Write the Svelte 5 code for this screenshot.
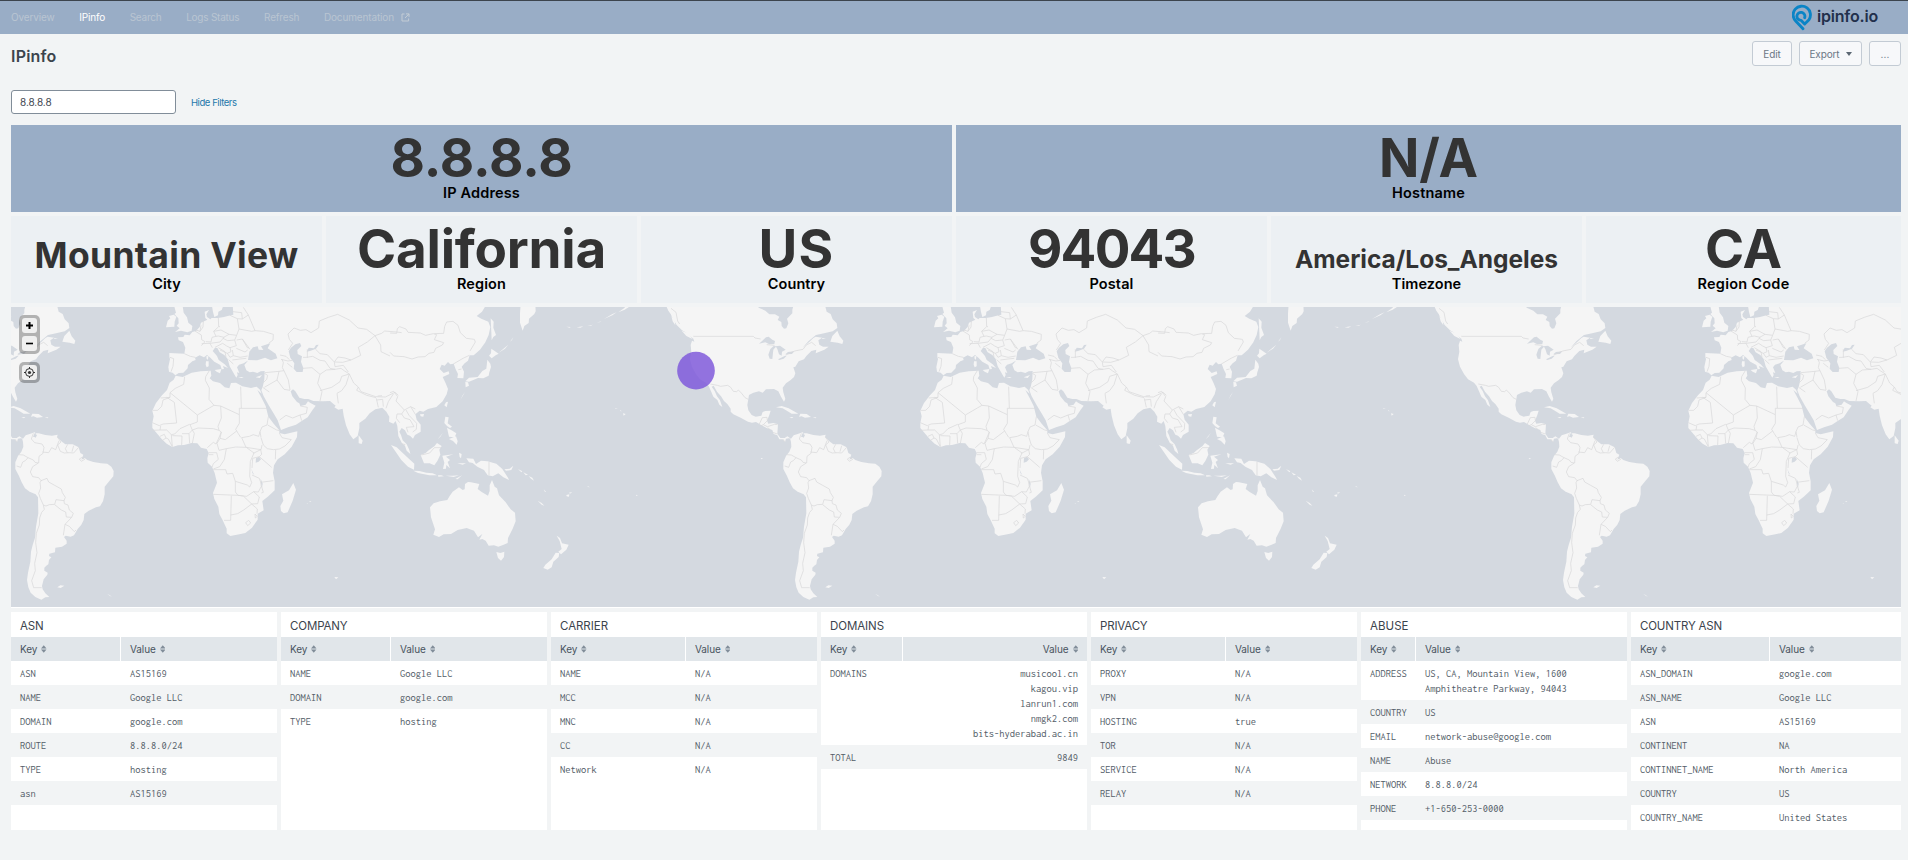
<script>
  // Spreads the letters of a text so that it takes the given width.
  function fit(node, width) {
    const range = document.createRange();
    range.selectNodeContents(node);
    const natural = range.getBoundingClientRect().width;
    const count = node.textContent.length;
    node.style.letterSpacing = (width - natural) / count + 'px';
  }

  const nav = [
    ['Overview', 43.5], ['IPinfo', 25.8], ['Search', 31.8], ['Logs Status', 53.2], ['Refresh', 35.2], ['Documentation', 70]
  ];

  const top = [
    { value: '8.8.8.8', w: 182, size: 53, label: 'IP Address', lw: 77 },
    { value: 'N/A', w: 99, size: 53, label: 'Hostname', lw: 73 }
  ];
  const details = [
    { value: 'Mountain View', w: 264, size: 35.5, label: 'City', lw: 28.5 },
    { value: 'California', w: 249, size: 53, label: 'Region', lw: 49 },
    { value: 'US', w: 76, size: 53, label: 'Country', lw: 57.5 },
    { value: '94043', w: 167, size: 53, label: 'Postal', lw: 44 },
    { value: 'America/Los_Angeles', w: 263, size: 24.5, label: 'Timezone', lw: 69.5 },
    { value: 'CA', w: 77, size: 53, label: 'Region Code', lw: 92 }
  ];

  const tables = [
    { title: 'ASN', tw: 23.5, key: 110, rows: [['ASN', 'AS15169'], ['NAME', 'Google LLC'], ['DOMAIN', 'google.com'], ['ROUTE', '8.8.8.0/24'], ['TYPE', 'hosting'], ['asn', 'AS15169']] },
    { title: 'COMPANY', tw: 57.5, key: 110, rows: [['NAME', 'Google LLC'], ['DOMAIN', 'google.com'], ['TYPE', 'hosting']] },
    { title: 'CARRIER', tw: 48, key: 135, rows: [['NAME', 'N/A'], ['MCC', 'N/A'], ['MNC', 'N/A'], ['CC', 'N/A'], ['Network', 'N/A']] },
    { title: 'DOMAINS', tw: 54, key: 82, right: true, rows: [['DOMAINS', 'musicool.cn\nkagou.vip\nlanrun1.com\nnmgk2.com\nbits-hyderabad.ac.in'], ['TOTAL', '9849']] },
    { title: 'PRIVACY', tw: 47.5, key: 135, rows: [['PROXY', 'N/A'], ['VPN', 'N/A'], ['HOSTING', 'true'], ['TOR', 'N/A'], ['SERVICE', 'N/A'], ['RELAY', 'N/A']] },
    { title: 'ABUSE', tw: 38.5, key: 55, rows: [['ADDRESS', 'US, CA, Mountain View, 1600\nAmphitheatre Parkway, 94043'], ['COUNTRY', 'US'], ['EMAIL', 'network-abuse@google.com'], ['NAME', 'Abuse'], ['NETWORK', '8.8.8.0/24'], ['PHONE', '+1-650-253-0000']] },
    { title: 'COUNTRY ASN', tw: 82, key: 139, rows: [['ASN_DOMAIN', 'google.com'], ['ASN_NAME', 'Google LLC'], ['ASN', 'AS15169'], ['CONTINENT', 'NA'], ['CONTINNET_NAME', 'North America'], ['COUNTRY', 'US'], ['COUNTRY_NAME', 'United States']] }
  ];

  const worldCopies = [-2304, 0, 2304, 4608];
</script>

<nav class="bar">
  {#each nav as [name, w], i}
    <a href="#top" class:active={i === 1}><span use:fit={w}>{name}</span>{#if i === 5}<svg class="ext" width="9" height="9" viewBox="0 0 9 9"><path d="M3.5 1H1v7h6.6V5.5M5 .9h3v3M8 .9 4 5" /></svg>{/if}</a>
  {/each}
  <div class="logo">
    <svg width="21" height="27" viewBox="0 0 63 81"><path d="M33 74 L11 51 A26 26 0 1 1 51 47 L38 60 L27 49 A12 12 0 1 1 38 41" /></svg>
    <span use:fit={61}>ipinfo.io</span>
  </div>
</nav>

<header>
  <h1><span use:fit={45.5}>IPinfo</span></h1>
  <div class="actions">
    <button style:width="40px"><span use:fit={17.5}>Edit</span></button>
    <button style:width="63px"><span use:fit={30}>Export</span><i class="caret"></i></button>
    <button style:width="32px"><span use:fit={9}>...</span></button>
  </div>
</header>

<div class="filters">
  <div class="input"><span use:fit={31.5}>8.8.8.8</span></div>
  <a href="#top"><span use:fit={45.5}>Hide Filters</span></a>
</div>

<main>
  {#snippet single(item)}
    <section class="single">
      <div class="value"><span style:font-size="{item.size}px" use:fit={item.w}>{item.value}</span></div>
      <div class="label"><span use:fit={item.lw}>{item.label}</span></div>
    </section>
  {/snippet}

  <div class="row two">{#each top as item}{@render single(item)}{/each}</div>
  <div class="row six">{#each details as item}{@render single(item)}{/each}</div>

  <div class="map">
    <svg width="1890" height="300" viewBox="33 21 5670 900">
      <defs>
        <g id="world">
          <!-- Americas -->
          <g transform="translate(-384 0)">
            <path class="land" d="M76 12 85 32 92 42 98 55 110 75 126 91 137 97 148 107 160 116 163 125 156 122 152 135 154 155 150 178 156 200 168 222 180 238 198 248 206 258 213 274 220 290 232 300 238 314 247 321 240 301 231 289 224 273 215 260 221 257 231 275 243 289 252 303 262 312 272 326 272 335 280 343 302 353 324 365 336 368 348 366 362 374 380 384 397 390 401 402 412 406 418 418 428 418 435 426 438 416 450 414 453 426 454 440 448 455 438 468 430 487 430 507 441 528 449 547 459 565 473 575 491 583 498 592 499 640 492 680 489 713 482 735 477 755 475 785 468 818 465 840 469 862 476 878 490 891 508 899 520 892 532 891 520 880 512 868 510 858 515 838 526 824 527 818 517 812 517 803 523 797 529 793 531 780 538 772 531 768 532 761 549 757 550 743 570 740 584 731 584 722 576 711 581 707 596 710 606 706 617 687 628 674 635 660 637 642 650 632 672 622 684 619 693 604 698 583 698 560 712 543 724 529 725 513 718 500 706 491 687 490 664 486 646 480 638 474 628 479 634 464 625 459 620 442 602 433 580 433 570 425 555 411 557 404 540 407 520 405 500 400 491 400 490 412 483 410 490 396 473 402 461 406 453 416 442 409 434 414 421 414 412 401 414 373 400 369 385 371 381 362 388 345 392 332 376 333 368 336 364 347 347 350 335 345 325 331 322 315 325 297 327 285 340 278 357 274 368 278 378 268 402 267 415 274 423 290 432 305 436 297 430 277 428 263 438 250 452 240 462 231 466 220 460 202 466 200 476 184 492 178 499 168 514 153 529 149 527 160 553 149 566 140 549 140 538 134 535 121 546 113 527 110 515 117 528 105 552 100 578 94 592 84 590 70 578 58 572 42 560 35 554 12 462 12 457 29 457 40 441 56 445 70 439 85 432 86 425 78 424 66 413 60 418 50 405 43 388 43 376 32 356 23 350 12Z" />
            <path class="land" d="M592 92 599 109 610 122 607 132 593 128 571 125 577 108ZM545 113 558 117 548 117ZM125 92 145 100 157 117 139 108ZM94 48 104 60 106 76 98 64ZM408 322 425 318 446 325 475 341 455 341 443 334 428 325ZM477 350 481 341 500 342 513 351 495 353 485 349ZM448 352 460 351 456 355ZM518 352 529 352 527 355ZM556 862 565 856 577 857 566 864ZM706 883 713 885 720 891ZM362 474 369 475 365 478ZM438 309 441 315M450 318 455 322M485 863 500 861 506 876 495 890 478 878Z" />
            <path class="water" d="M357 131 378 112 386 110 397 119 405 123 403 132 388 133 376 127ZM389 176 385 164 391 147 401 138 409 139 400 149 397 177ZM407 139 420 137 437 149 426 155 425 167 417 163 412 147ZM414 178 434 168 440 167 431 176 418 180ZM436 163 444 156 463 154 456 162ZM488 143 505 124 529 104 511 123ZM489 402 495 405 491 413 485 409Z" />
            <path class="border" d="M160 109H340L345 114 362 117 M380 134 404 136 M437 165 464 153 489 148 499 135 515 127 527 137 M211 252 232 256 242 259 263 256 272 262 280 274 290 275 295 270 304 279 315 293 325 298 M358 372 367 353 381 352 382 362 370 374 363 377 M370 374 382 380 404 373 413 374 M383 383 391 389 M398 397 412 402 M430 418 434 426 M484 400 478 417 488 428 510 432 516 442 513 460 501 469 500 489 M440 464 454 465 468 473 460 482 452 486 446 502 434 498 M468 473 484 480 489 487 499 489 482 500 475 516 482 530 500 533 507 542 525 535 530 546 548 556 568 567 571 578 580 592 576 602 552 599 548 613 532 614 522 618 514 615 505 595 500 580 506 564 504 548 508 541 M548 614 568 630 581 636 583 651 599 652 604 640 592 630 588 615 577 611 576 601 M599 652 579 673 592 679 607 695 612 690 M579 673 574 706 M514 615 517 628 509 637 503 654 502 675 493 700 491 728 495 758 488 790 490 812 479 842 485 863 509 863 M511 456 530 458 539 443 551 449 561 422 M556 411 567 426 557 435 565 454 577 459 592 458 605 459 620 442 M587 433 580 446 586 458 M605 437 600 455 M622 477 630 472 638 478 628 484ZM93 25 108 37 113 63 119 72" />
          </g>
          <!-- Eurasia and Africa -->
          <path class="land" d="M698 12 700 44 683 48 672 51 654 54 635 54 631 58 621 51 619 43 627 30 614 35 616 54 622 59 603 68 599 81 588 93 577 96 569 106 554 104 550 111 534 112 536 121 549 126 556 143 553 161 508 159 508 170 510 177 505 201 507 215 518 218 526 226 536 219 550 218 563 205 564 195 577 184 587 180 585 173 599 166 612 172 621 165 632 174 643 185 661 195 665 208 672 207 669 198 684 204 674 193 656 180 651 168 638 153 645 143 652 144 659 157 673 165 683 177 689 199 704 225 709 233 713 225 711 217 718 219 711 202 717 194 731 190 738 185 744 182 733 195 739 211 749 217 759 215 772 219 782 214 794 213 793 238 789 257 784 271 791 289 807 317 822 342 833 361 843 390 864 382 888 374 905 363 923 352 937 331 947 317 930 308 924 304 917 314 901 318 898 310 891 306 877 289 872 274 879 268 886 274 898 293 913 297 925 297 940 303 969 304 990 303 1007 317 1003 322 1015 329 1028 326 1031 347 1038 376 1049 403 1060 418 1073 408 1078 384 1078 369 1096 356 1109 340 1126 328 1147 323 1159 335 1168 350 1167 365 1180 371 1187 363 1192 378 1195 408 1206 430 1215 437 1220 452 1231 462 1228 450 1220 433 1208 421 1203 405 1198 395 1205 384 1215 391 1222 404 1230 407 1239 416 1245 405 1262 395 1262 374 1250 359 1246 343 1259 332 1270 335 1284 327 1309 321 1328 304 1340 283 1344 267 1337 250 1328 231 1348 222 1346 214 1331 219 1319 207 1325 194 1334 197 1344 186 1351 193 1361 191 1367 208 1374 222 1372 234 1390 235 1392 215 1385 200 1394 190 1404 182 1409 166 1421 166 1440 149 1456 127 1466 105 1471 81 1465 65 1444 56 1430 48 1446 35 1460 12Z" />
          <path class="land" d="M527 227 548 231 575 218 602 214 632 212 634 227 629 235 639 244 660 249 674 262 688 265 693 249 708 248 727 259 753 264 770 260 780 269 785 281 772 270 783 290 797 318 805 350 821 371 838 391 838 399 854 403 892 394 891 411 875 440 854 463 833 478 822 496 819 518 824 544 824 571 805 589 787 603 791 631 773 641 773 659 756 683 736 699 718 703 691 708 680 700 680 686 668 661 658 642 655 620 643 597 639 579 651 548 644 519 636 500 623 488 622 475 626 459 620 447 603 443 592 430 575 429 552 435 534 436 517 441 500 431 485 417 473 403 457 384 457 370 461 349 457 332 468 309 486 286 501 270 509 248 521 239Z" />
          <path class="water" d="M744 180 748 155 759 142 773 139 776 149 790 150 783 139 811 130 803 145 827 161 832 175 813 181 795 173 772 181ZM866 154 873 143 886 133 900 129 904 138 892 150 893 162 906 169 903 185 910 204 908 216 890 216 881 206 883 190 871 173ZM920 155 926 143 942 145 948 135 956 134 948 146 930 153ZM768 475 777 470 783 478 776 485 767 488ZM754 504 757 514 763 526 757 519ZM782 536 788 551 786 563 783 550Z" />
          <path class="land" d="M521 12 528 38 523 42 535 55 536 70 530 77 539 85 525 96 543 92 562 97 575 92 577 78 565 68 561 52 551 38 547 12ZM498 82 503 62 511 55 507 48 521 44 529 50 524 65 523 80ZM635 12 639 36 643 51 654 46 655 35 665 30 672 12ZM619 169 625 168 624 179 620 177ZM618 184 626 184 626 199 620 202 617 194ZM644 210 664 207 660 220 650 215ZM714 231 731 231 725 234ZM767 232 786 225 779 234ZM880 549 888 569 878 602 863 637 851 640 843 633 841 618 850 602 846 583 867 571ZM1076 406 1088 422 1085 432 1076 430ZM1003 831 1015 832 1008 838ZM928 604 934 603 930 607ZM920 609 923 609 922 611Z" />
          <path class="border" d="M554 230 551 253 526 265 510 278 510 292 482 294 M510 278 592 345 628 324 642 316 627 298 628 264 616 241 617 230 628 212 M500 292 523 307 530 369 489 372 478 377 457 368 M510 292 489 300 485 319 473 331 458 331 M642 316 662 318 718 344 718 325 724 325 722 260 M724 325 800 325 M718 344 718 370 707 388 715 401 722 412 M662 318 664 354 654 379 657 391 640 386 594 384 577 390 570 374 592 366 592 345 M457 391 480 390 482 378 M480 390 500 390 514 404 524 402 540 386 569 373 M480 409 493 403 498 414 486 422 M498 414 505 417 517 440 514 404 M517 407 546 408 545 435 M546 401 567 401 569 430 M567 401 577 390 583 400 577 430 M657 391 664 396 655 417 648 432 640 427 622 443 M664 396 660 415 676 419 710 393 M660 415 651 430 657 451 679 446 707 441 738 442 725 413 748 409 760 404 776 409 780 395 783 412 M780 395 786 381 801 375 805 350 M803 375 830 390 839 392 M838 399 846 413 874 419 855 438 838 447 820 449 802 446 790 435 783 413 M826 478 827 450 M738 442 783 449 786 435 M760 460 782 449 785 463 778 470 815 502 M778 470 758 475 756 504 M679 446 673 479 659 500 640 507 M640 509 677 509 681 522 698 520 706 544 742 555 749 561 755 548 749 529 751 484 762 459 740 443 M756 525 778 535 782 547 820 542 M626 458 650 458 655 478 640 491 636 502 M626 464 640 464 M640 583 714 586 706 576 706 544 M714 586 740 589 761 575 775 576 784 559 782 547 M694 587 692 661 672 661 M692 645 713 641 731 630 755 612 730 588 714 586 M755 612 773 611 778 591 761 575 M755 612 772 627 771 641 M737 668 746 661 752 669 743 677ZM765 642 772 649 766 654ZM784 557 790 577 784 579" />
          <path class="border" d="M510 172 521 176 519 199 513 215 M553 161 571 169 586 172 M585 93 604 105 605 119 615 125 604 137 M588 90 600 94 603 76 M610 62 609 81 600 94 M655 54 656 80 641 94 648 109 636 112 633 126 618 125 M605 131 630 130 637 143 M630 130 660 126 672 112 655 108 648 109 M641 94 663 90 687 103 671 112 M660 80 657 80 M687 103 710 106 717 87 712 56 690 46 M710 106 704 120 683 122 669 115 M704 120 709 137 690 143 680 138 668 130 645 142 M690 143 693 155 682 160 660 150 M655 143 675 155 678 172 M682 160 690 172 700 167 697 150 M709 145 735 156 743 150 M700 167 720 172 743 168 M697 180 720 177 739 175 M686 179 700 192 M710 120 727 117 742 143 747 144 M727 117 750 148 M717 87 755 94 765 92 745 45 727 57 712 56 M727 57 725 38 699 35 M745 45 730 22 M765 92 790 94 820 103 819 120 806 130 M840 165 858 169 868 179 M846 178 850 188 M843 178 864 183 877 181 M850 188 847 203 852 212 837 214 795 218 M852 212 865 240 870 270 M862 190 877 202 M837 214 831 240 793 262 M831 240 852 268 870 271 M793 220 803 226 800 238 790 248 M788 262 808 276 M839 360 858 346 878 354 900 345 919 340 922 322 901 318 M900 345 905 362 M908 205 936 203 960 223 953 250 966 275 960 303 M960 223 979 210 1005 208 1023 205 1034 213 1048 222 1025 229 1020 245 995 262 960 272 M909 172 920 172 938 169 960 181 975 183 990 205 1005 208 M922 173 922 148 M946 147 960 161 982 164 1003 186 1014 171 1035 174 1053 180 M1005 186 1028 187 1053 180 1082 166 1075 142 1102 126 1125 107 M1003 186 1005 200 1030 196 1045 216 M865 150 878 130 868 118 864 102 882 84 901 91 918 89 933 98 956 84 958 63 985 52 1013 43 1048 60 1074 84 1100 88 1125 107 M1125 107 1145 100 1154 93 1190 96 1205 98 M1125 107 1142 135 1143 155 1170 168 M1048 222 1061 249 1075 261 1083 275 1127 290 1156 291 1185 277 1195 286 M1075 261 1070 271 1100 286 1128 293 M1048 222 1038 254 1025 272 1011 280 1015 310 M1133 288 1146 287 M1129 295 1135 322 M1130 300 1148 298 1150 320 M1180 282 1165 305 1158 325" />
          <!-- East Asia and Oceania -->
          <g transform="translate(1170 0)">
            <path class="land" d="M392 12 390 40 390 68 398 92 403 78 416 69 417 56 433 42 437 34 436 12ZM302 55 311 65 310 83 318 105 310 111 305 121 304 97ZM304 146 314 153 326 161 317 166 305 175 297 167 303 160ZM292 179 301 191 303 201 298 217 296 227 280 235 264 234 250 240 237 245 226 244 237 233 263 231 277 213 289 206ZM226 246 234 247 237 257 227 262ZM168 307 174 305 170 322 163 316ZM90 343 102 342 100 350 92 349ZM166 350 176 352 173 370 186 380 180 384 171 378 163 369ZM171 383 187 392 199 400 194 412 177 410ZM177 417 198 409 203 424 200 434 189 423ZM92 465 107 459 116 451 133 439 141 429 155 438 148 449 151 464 142 483 133 496 119 490 102 490ZM3 435 20 442 39 460 55 475 73 491 72 509 54 500 34 480 20 460ZM70 512 88 513 109 518 128 520 141 526 118 526 84 519ZM144 526 154 526 162 529 145 530ZM167 527 188 527 207 526 191 531ZM196 537 216 526 203 538ZM157 467 190 463 168 470 180 480 173 486 180 505 169 495 168 506 159 507 163 488ZM207 458 215 462 213 475 209 471ZM202 490 228 490 218 494ZM229 475 250 476 258 492 273 482 292 484 319 491 337 507 354 533 357 540 340 532 325 520 308 529 293 526 282 510 262 500 248 489 237 487ZM343 508 359 506 370 497 364 510 348 512ZM384 507 397 514 394 517ZM400 517 414 524 407 526ZM416 528 427 533 432 542 423 536ZM443 602 455 609 463 617 455 614ZM461 568 468 575 465 576ZM529 585 538 583 537 590 530 589ZM537 578 547 576 540 581ZM592 558 600 562 594 561ZM699 340 707 342 701 347ZM676 324 683 327 676 326ZM690 331 696 334 690 333ZM738 584 744 587 738 587ZM713 12 728 14 704 29 685 37 702 25ZM680 37 667 46 642 57 666 43ZM635 62 620 70 630 66ZM608 74 592 78 603 77ZM580 79 560 82 571 83ZM542 81 529 80 539 83ZM370 112 360 125 366 120ZM355 134 326 158 345 146ZM225 276 211 300 218 286ZM158 399 143 418 151 410Z" />
            <path class="land" d="M120 622 131 610 150 604 172 600 179 588 188 575 207 562 218 570 224 568 225 552 234 546 243 547 268 552 263 567 275 576 294 587 299 573 299 556 306 540 314 560 321 565 327 586 347 607 362 628 375 638 377 664 368 686 354 714 353 729 339 735 325 740 312 736 296 737 287 722 277 717 268 719 277 702 264 712 252 692 230 684 203 690 183 702 161 703 147 711 130 704 135 688 123 652ZM319 756 331 759 343 755 342 771 333 782 324 774ZM500 707 510 714 516 730 536 734 529 749 513 763 505 755 515 747 509 723ZM497 758 508 759 506 771 490 785 485 802 473 809 460 804 466 794 485 778Z" />
            <path class="border" d="M0 99 20 100 22 86 29 80 48 87 54 97 91 99 107 106 130 101 140 104 133 119 161 128 157 135 137 145 132 157 117 160 105 170 84 171 66 177 42 170 11 168 0 157 M133 101 161 100 164 79 170 66 189 64 204 76 211 98 229 115 253 118 256 126 240 153 M238 166 219 175 190 192 M205 209 215 207 M0 278 11 274 23 290 18 303 30 316 43 330 62 320 76 327 M43 330 35 342 21 342 19 355 29 368 M35 342 43 354 60 359 72 380 49 382 54 397 M48 330 57 346 80 370 79 388 68 396 M62 320 76 343 M94 465 119 459 133 443 154 443 M297 486V526 M189 463 M35 431 46 434" />
          </g>
        </g>
      </defs>
      {#each worldCopies as dx}<use href="#world" x={dx} />{/each}
      <circle cx="2088" cy="212" r="56.5" fill="#7c56db" fill-opacity=".82" />
    </svg>
    <div class="controls">
      <div class="ctl"><b><svg width="9" height="9" viewBox="0 0 9 9"><path d="M4.5 1v7M1 4.5h7" stroke="#000" stroke-width="2" /></svg></b><b><svg width="9" height="9" viewBox="0 0 9 9"><path d="M1 4.5h7" stroke="#000" stroke-width="1.6" /></svg></b></div>
      <div class="ctl"><b><svg width="11" height="11" viewBox="0 0 11 11" fill="none" stroke="#333"><circle cx="5.5" cy="5.5" r="3.9" /><circle cx="5.5" cy="5.5" r="1.6" fill="#333" stroke="none" /><path d="M5.5 0v2M5.5 9v2M0 5.5h2M9 5.5h2" /></svg></b></div>
    </div>
  </div>

  <div class="tables">
    {#each tables as t}
      <section class="panel">
        <h2><span use:fit={t.tw}>{t.title}</span></h2>
        <div class="grid head" style:grid-template-columns="{t.key}px 1fr">
          {#each [['Key', 17.2], ['Value', 25.7]] as [name, w], i}
            <div class:right={t.right && i === 1}><span use:fit={w}>{name}</span><svg width="5.5" height="8" viewBox="0 0 5.5 8"><path d="M0 3.4 2.75 .2 5.5 3.4ZM0 4.6 2.75 7.8 5.5 4.6Z" /></svg></div>
          {/each}
        </div>
        {#each t.rows as [key, value]}
          <div class="grid data" style:grid-template-columns="{t.key}px 1fr">
            <div>{key}</div>
            <div class:right={t.right}>{value}</div>
          </div>
        {/each}
      </section>
    {/each}
  </div>
</main>

<style>
  :global(body) { margin: 0; background: #f2f4f5; font-family: Inter, "Open Sans", sans-serif; color: #3c444d; }
  a { text-decoration: none; }
  span { white-space: nowrap; }
  .bar { box-sizing: border-box; height: 34px; border-top: 1px solid #3c444d; background: #99adc6; display: flex; align-items: center; gap: 24.7px; padding: 0 30px 0 11px; font-size: 10px; line-height: 33px; }
  .bar a { color: #b9c5d2; display: flex; align-items: center; height: 31px; }
  .bar a.active { color: #fff; }
  .ext { margin-left: 7px; fill: none; stroke: #c3ccd5; stroke-width: 1; }
  .logo { margin-left: auto; display: flex; align-items: center; gap: 4px; color: #22304c; font-size: 16px; font-weight: 600; }
  .logo svg { fill: none; stroke: #0a84c6; stroke-width: 8.5; stroke-linejoin: round; stroke-linecap: round; }
  .logo span { height: 33px; line-height: 31px; }
  header { display: flex; justify-content: space-between; padding: 7px 7px 0 11px; height: 49px; }
  h1 { margin: 0; font-size: 16px; font-weight: 600; line-height: 30px; }
  .actions { display: flex; gap: 7px; }
  button { box-sizing: border-box; height: 25px; padding: 0; border: 1px solid #c3cbd4; border-radius: 3px; background: #f7f8fa; color: #6b7785; font: 10px Inter, sans-serif; display: flex; align-items: center; justify-content: center; }
  .caret { margin-left: 6px; border: 3px solid transparent; border-top: 4px solid #5c6773; border-bottom: 0; }
  .filters { display: flex; align-items: center; gap: 15px; padding-left: 11px; height: 24px; font-size: 10px; }
  .filters a { color: #1e78ab; line-height: 23px; font-size: 9.5px; }
  .input { box-sizing: border-box; width: 165px; height: 24px; border: 1px solid #818d99; border-radius: 3px; background: #fff; padding-left: 8px; line-height: 22px; }
  main { padding: 11px 7px 0 11px; }
  .row { display: grid; gap: 4px; margin-bottom: 4px; }
  .two { grid-template-columns: 941px 945px; }
  .six { grid-template-columns: repeat(5, 311px) 315px; }
  .single { height: 87px; text-align: center; background: #ecf0f3; font-weight: 700; }
  .two .single { background: #99adc6; }
  .value { height: 66px; font-size: 53px; line-height: 66px; color: #333; }
  .value span { line-height: 1; font-weight: 700; }
  .label { margin-top: -8px; font-size: 14.5px; font-weight: 600; line-height: 20px; color: #000; }
  .map { position: relative; height: 300px; background: #d4d9e0; border-bottom: 1px solid #fff; margin-bottom: 4px; overflow: hidden; }
  .map > svg { display: block; }
  .land { fill: #f5f5f5; }
  .water { fill: #d4d9e0; }
  .border { fill: none; stroke: #d8d8da; stroke-width: 2.2; stroke-linejoin: round; }
  .controls { position: absolute; left: 8px; top: 8px; display: flex; flex-direction: column; gap: 8px; }
  .ctl { padding: 3px; border-radius: 5px; background: rgba(0, 0, 0, .27); display: flex; flex-direction: column; gap: 3px; }
  .ctl b { width: 15px; height: 15px; border-radius: 3px; background: #f0f0f0; display: flex; align-items: center; justify-content: center; }
  .tables { display: grid; grid-template-columns: repeat(6, 266px) 270px; gap: 4px; }
  .panel { height: 218px; background: #fff; overflow: hidden; }
  h2 { margin: 0; padding: 3px 9px 0; height: 22px; line-height: 22px; font-size: 11.5px; font-weight: 400; }
  .grid { display: grid; }
  .head > div { box-sizing: border-box; height: 24px; padding: 0 9px; background: #e1e6ea; line-height: 23px; font-size: 10px; color: #4a545f; display: flex; align-items: center; gap: 4px; }
  .head > div:first-child { border-right: 1px solid #fff; }
  .head svg { fill: #818d99; }
  .head .right { justify-content: flex-end; }
  .data { padding: 5px 0 4px; font: 10.5px/15px Inconsolata, "Liberation Mono", monospace; color: #525c67; }
  .data > div { padding-left: 9px; white-space: pre; }
  .data .right { text-align: right; padding-right: 9px; }
  .data:nth-child(even) { background: #f2f4f5; }
</style>
